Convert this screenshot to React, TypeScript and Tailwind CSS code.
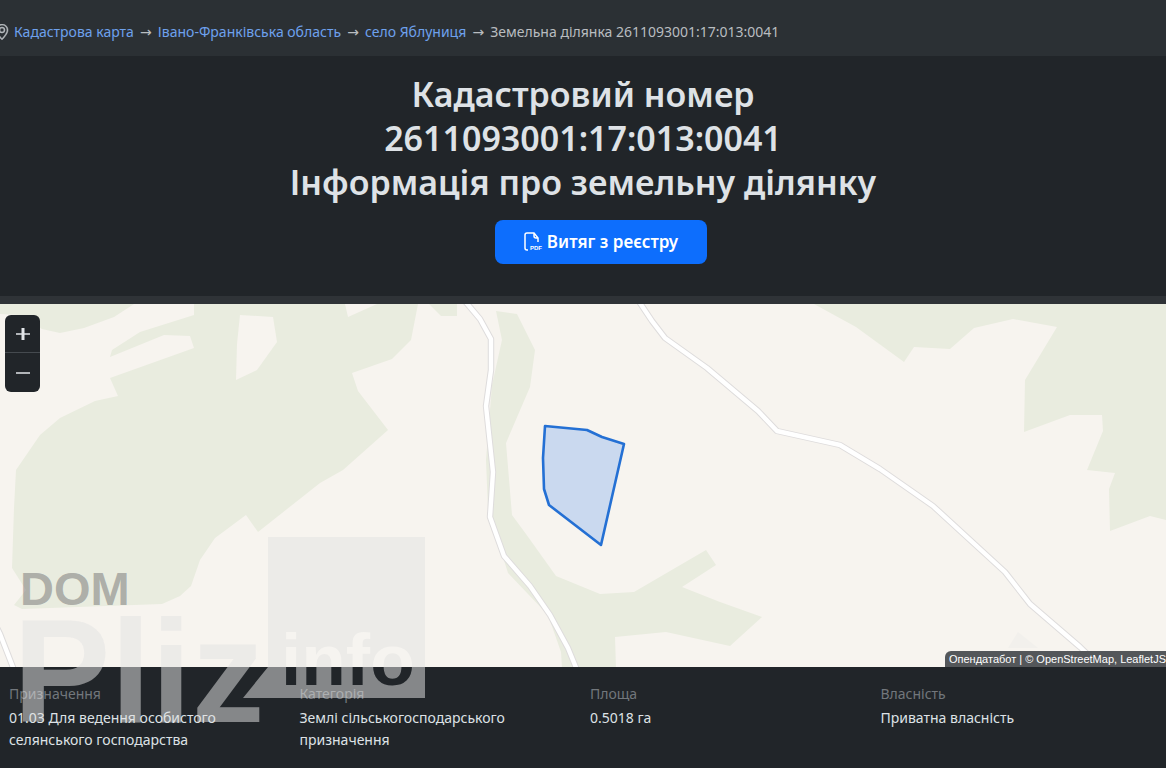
import React from 'react';
import { BsGeoAlt } from 'react-icons/bs';

interface Crumb {
  label: string;
  href: string;
}

interface Detail {
  label: string;
  value: string;
}

const crumbs: Crumb[] = [
  { label: 'Кадастрова карта', href: '#map' },
  { label: 'Івано-Франківська область', href: '#region' },
  { label: 'село Яблуниця', href: '#village' },
];

const details: Detail[] = [
  { label: 'Призначення', value: '01.03 Для ведення особистого селянського господарства' },
  { label: 'Категорія', value: 'Землі сільськогосподарського призначення' },
  { label: 'Площа', value: '0.5018 га' },
  { label: 'Власність', value: 'Приватна власність' },
];

const forests = [
  'M0 304H134L114 317L84 328L60 333L42 329L20 315L0 314Z',
  'M194 304H345L348 317L377 304H418L411 340L392 359L352 373L358 391L388 430L343 470L320 483L258 532L246 515L215 538L200 560L191 586L180 596L162 604L22 609L14 605L26 590L12 568L14 508L16 470L40 435L60 418L95 401L118 396L110 378L194 348L190 336L164 335L110 357L112 350L140 332L194 315Z',
  'M429 304H457V316H441Z',
  'M496 311L517 314L535 350L530 387L506 443L512 515L526 534L556 576L600 594L634 592L706 550L716 565L682 587L720 602L762 617L730 646L666 632L615 637L616 668H562L561 652L548 615L508 573L488 510L486 460L492 385L502 340Z',
  'M814 304H1166V520L1150 516L1110 531L1109 489L1115 473L1087 470L1103 431L1102 415H1070L1024 432L1025 380L1057 327L1013 319L974 328L950 349L914 347L904 362L856 327Z',
];

const roads = [
  'M464 300L480 319L491 339L491 370L486 406L493 472L490 517L504 556L530 586L550 615L568 648L577 670',
  'M638 300L652 321L665 338L707 368L758 411L777 431L840 445L880 469L933 506L1005 572L1030 604L1080 647L1102 668',
  'M-8 618L0 634L14 670',
];

function PdfIcon() {
  return (
    <svg viewBox="0 0 19 20" className="h-5 w-[19px]" fill="none" aria-hidden="true">
      <path
        d="M4 18H3Q1 18 1 16V3Q1 1 3 1H10L14 6V10M10 1V4Q10 6 12 6H14"
        stroke="currentColor"
        strokeWidth="1.5"
      />
      <text
        x="6"
        y="18"
        fontSize="6"
        fontWeight="700"
        fontFamily="'Liberation Sans', sans-serif"
        fill="currentColor"
      >
        PDF
      </text>
    </svg>
  );
}

function Breadcrumbs() {
  return (
    <nav aria-label="breadcrumb" className="flex h-14 items-center overflow-hidden bg-[#2b3034] pt-2 text-sm text-[#b9bdc0]">
      <BsGeoAlt className="-ml-[6px] mr-1 size-4 shrink-0" strokeWidth="0.5" aria-hidden="true" />
      <ol className="flex items-center whitespace-nowrap">
        {crumbs.map((crumb) => (
          <li key={crumb.href} className="flex items-center">
            <a href={crumb.href} className="text-[#6ea1ed] hover:underline">
              {crumb.label}
            </a>
            <span className="w-6 text-center font-['DejaVu_Sans',sans-serif]" aria-hidden="true">→</span>
          </li>
        ))}
        <li aria-current="page">Земельна ділянка 2611093001:17:013:0041</li>
      </ol>
    </nav>
  );
}

function ParcelMap() {
  return (
    <section className="relative h-[363px] overflow-hidden bg-[#f7f4ef]">
      <svg
        viewBox="0 304 1166 363"
        preserveAspectRatio="xMidYMid slice"
        className="block h-full w-full"
        role="img"
        aria-label="Межі земельної ділянки"
      >
        {forests.map((d) => (
          <path key={d} d={d} fill="#e9ecdf" />
        ))}
        <path d="M240 315L273 317L277 342L257 370L236 380L237 344Z" fill="#f7f4ef" />
        <path d="M1018 632L1008 648H1038Z" fill="#f2f0ec" />
        {roads.map((d) => (
          <g key={d} fill="none" strokeLinejoin="round">
            <path d={d} stroke="#dedcdc" strokeWidth="6.4" />
            <path d={d} stroke="#ffffff" strokeWidth="4.4" />
          </g>
        ))}
        <path
          d="M545 426L587 430L602 437L624 444L601 545L549 505L544 489L543 458Z"
          fill="#3380f0"
          fillOpacity="0.23"
          stroke="#2470d4"
          strokeWidth="2.6"
          strokeLinejoin="round"
        />
      </svg>

      {/* Zoom control */}
      <div className="absolute left-[5px] top-[11px] flex w-[35px] flex-col overflow-hidden rounded-md bg-[#212529] text-[#e2e5e9]">
        <button type="button" aria-label="Наблизити" className="flex h-[38px] items-center justify-center border-b border-[#454a4f]">
          <svg viewBox="0 0 14 14" className="size-[14px]" fill="none" stroke="currentColor">
            <path d="M7 1V13" strokeWidth="3" />
            <path d="M0 7H14" strokeWidth="1.6" />
          </svg>
        </button>
        <button type="button" aria-label="Віддалити" className="flex h-[39px] items-center justify-center">
          <svg viewBox="0 0 14 14" className="size-[14px]" fill="none" stroke="currentColor">
            <path d="M0 7H14" strokeWidth="1.6" />
          </svg>
        </button>
      </div>

      <p className="absolute bottom-0 right-0 whitespace-nowrap rounded-tl-md bg-[#54575a] pl-1 font-['Liberation_Sans',sans-serif] text-[11px] leading-4 text-white">
        Опендатабот | © OpenStreetMap, LeafletJS
      </p>
    </section>
  );
}

function Watermark() {
  return (
    <svg
      viewBox="0 536 440 200"
      className="pointer-events-none absolute left-0 top-[232px] h-[200px] w-[440px]"
      fontFamily="'Liberation Sans', sans-serif"
      fontWeight="700"
    >
      <defs>
        <linearGradient id="info-fill" gradientUnits="userSpaceOnUse" x1="0" y1="536" x2="0" y2="736">
          <stop offset="0.655" stopColor="#f6f4f0" />
          <stop offset="0.655" stopColor="#212529" />
        </linearGradient>
      </defs>
      <path d="M268 537H425V698H243L268 667Z" fill="#e3e3e3" fillOpacity="0.52" />
      <text x="20" y="605" fontSize="47" fill="#737373" fillOpacity="0.52">DOM</text>
      <text x="13" y="722" fontSize="146" fill="#e3e3e3" fillOpacity="0.52">Pliz</text>
      <text x="281" y="685" fontSize="73" fill="url(#info-fill)">info</text>
    </svg>
  );
}

export default function App() {
  return (
    <div className="min-h-screen overflow-hidden bg-[#212529] font-['Noto_Sans',sans-serif] text-[#dee2e6]">
      <Breadcrumbs />

      <header className="flex flex-col items-center pb-8 pt-4 text-center">
        <h1 className="text-[34px] font-semibold leading-[44px]">
          Кадастровий номер
          <br />
          2611093001:17:013:0041
          <br />
          Інформація про земельну ділянку
        </h1>
        <button
          type="button"
          className="ml-9 mt-4 flex h-11 w-[212px] items-center justify-center gap-1 rounded-lg bg-[#0d6efd] text-[17px] font-semibold text-white hover:bg-[#0b5ed7]"
        >
          <PdfIcon />
          Витяг з реєстру
        </button>
      </header>

      <main className="relative border-t-8 border-[#2f3337]">
        <ParcelMap />
        <dl className="grid grid-cols-4 pb-4 pr-1 pt-4 text-sm leading-[22px]">
          {details.map((detail) => (
            <div key={detail.label} className="pl-[9px] pr-10">
              <dt className="text-[#72777c]">{detail.label}</dt>
              <dd className="mt-[2px]">{detail.value}</dd>
            </div>
          ))}
        </dl>
        <Watermark />
      </main>
    </div>
  );
}
